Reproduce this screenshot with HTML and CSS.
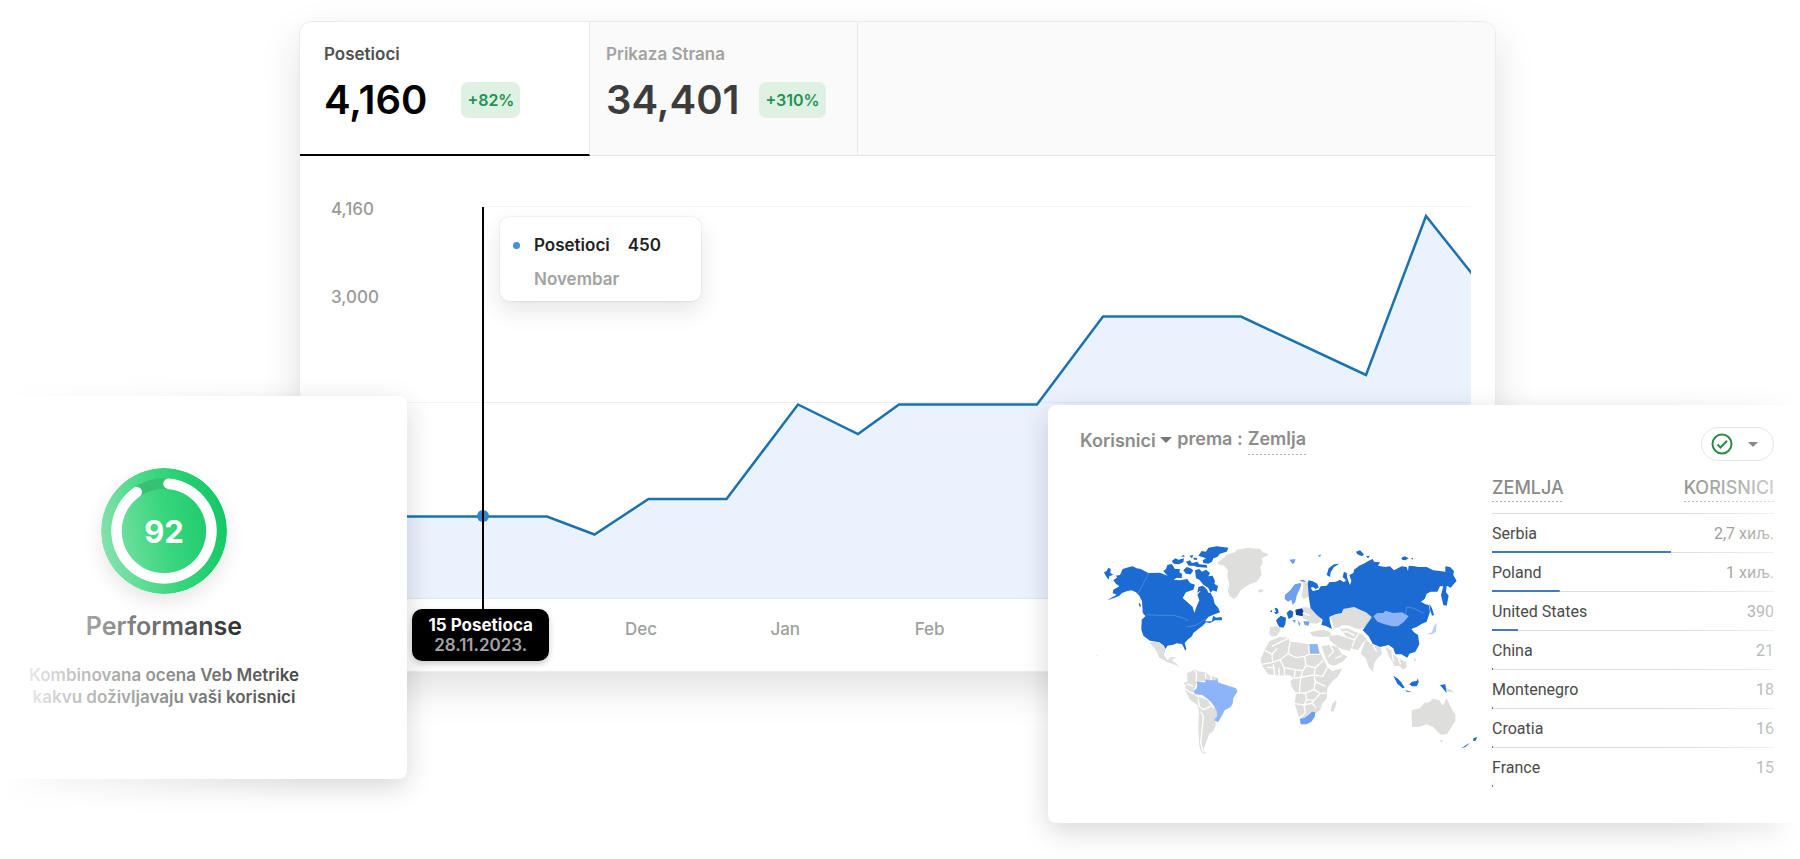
FILE: index.html
```html
<!DOCTYPE html>
<html lang="sr-Latn">
<head>
<meta charset="utf-8">
<meta name="viewport" content="width=device-width, initial-scale=1">
<title>Analitika</title>
<link rel="stylesheet" href="styles.css">
</head>
<body>
<main class="stage">

  <section class="panel" aria-label="Posete">
    <div class="tabs" role="tablist">
      <button class="tab tab-active" role="tab" aria-selected="true">
        <span class="tab-title">Posetioci</span>
        <span class="tab-row"><span class="tab-value">4,160</span><span class="badge">+82%</span></span>
      </button>
      <button class="tab tab-second" role="tab" aria-selected="false">
        <span class="tab-title">Prikaza Strana</span>
        <span class="tab-row"><span class="tab-value">34,401</span><span class="badge">+310%</span></span>
      </button>
      <div class="tabs-rest"></div>
    </div>
    <div class="chart">
      <div class="y-axis"><span>4,160</span><span>3,000</span></div>
      <div class="plot">
        <svg class="plot-svg" viewBox="380 206 1091 393" preserveAspectRatio="none" aria-hidden="true">
          <path class="grid" d="M484 206.500H1471M380 402.500H1471"/>
          <path class="area" d="M380 516.500H547L594.500 534.500L648.500 499H726.500L798 404.500L858 434L899 404.500H1037L1103 316.500H1241L1366 375L1426 216L1471 272V598H380Z"/>
          <path class="grid" d="M484 402.500H1471"/>
          <path class="base" d="M380 598.500H1471"/>
          <path class="line" d="M380 516.500H547L594.500 534.500L648.500 499H726.500L798 404.500L858 434L899 404.500H1037L1103 316.500H1241L1366 375L1426 216L1473 275"/>
        </svg>
        <div class="marker">
          <span class="marker-dot"></span>
          <div class="marker-label"><strong>15 Posetioca</strong><span>28.11.2023.</span></div>
        </div>
        <div class="tooltip">
          <span class="tooltip-dot"></span><span>Posetioci</span><span>450</span>
          <span class="tooltip-month">Novembar</span>
        </div>
        <div class="months"><span>Dec</span><span>Jan</span><span>Feb</span></div>
      </div>
    </div>
  </section>

  <section class="score" aria-label="Performanse">
    <svg class="gauge" viewBox="0 0 126 126" role="img" aria-label="Ocena 92">
      <defs>
        <linearGradient id="gauge-fill" x1="0" y1="0.600" x2="1" y2="0.400">
          <stop offset="0" stop-color="#86e2ad"/>
          <stop offset="0.500" stop-color="#3bd67f"/>
          <stop offset="1" stop-color="#12c864"/>
        </linearGradient>
      </defs>
      <circle cx="63" cy="63" r="63" fill="url(#gauge-fill)"/>
      <path d="M35.700 24.100A47.500 47.500 0 0 1 67.500 15.700" fill="none" stroke="#36c174" stroke-width="10.500"/>
      <path d="M67.500 15.700A47.500 47.500 0 1 1 35.700 24.100" fill="none" stroke="#fff" stroke-width="10.500" stroke-linecap="round"/>
      <text class="gauge-text" x="63" y="75" text-anchor="middle">92</text>
    </svg>
    <h2 class="score-title">Performanse</h2>
    <p class="score-text">Kombinovana ocena Veb Metrike<br>kakvu doživljavaju vaši korisnici</p>
  </section>

  <section class="users" aria-label="Korisnici prema zemlji">
    <header class="users-head">
      <div class="users-title">
        <button class="plain">Korisnici <svg width="12" height="6" viewBox="0 0 12 6" aria-hidden="true"><path d="M0 0H12L6 6Z" fill="#777"/></svg></button>
        <span>prema :</span>
        <a class="dotted" href="#zemlja">Zemlja</a>
      </div>
      <button class="pill" aria-label="Status podataka">
        <svg width="22" height="22" viewBox="0 0 22 22" aria-hidden="true"><circle cx="11" cy="11" r="9.500" fill="none" stroke="#2f8a4c" stroke-width="2"/><path d="M6.500 11.500L9.500 14.500L16 7.800" fill="none" stroke="#2f8a4c" stroke-width="2"/></svg>
        <svg width="10" height="5" viewBox="0 0 10 5" aria-hidden="true"><path d="M0 0H10L5 5Z" fill="#888"/></svg>
      </button>
    </header>
    <div class="users-body" id="zemlja">
      <svg class="map" viewBox="45 40 1155 640" role="img" aria-label="Mapa sveta">
        <g class="land-blue">
          <path d="M100 152L112 143L107 138L120 136L128 118L145 113L158 110L170 116L182 118L205 130L240 129L262 138L275 150L300 152L322 148L330 160L345 165L340 180L318 188L308 205L325 220L338 232L343 250L350 230L358 212L352 195L365 180L380 178L386 190L392 190L400 205L404 222L415 235L420 248L400 255L385 262L375 275L395 275L400 258L408 264L425 262L426 272L405 272L390 280L378 278L368 288L355 298L340 310L336 320L325 328L314 340L319 358L316 363L312 355L306 343L290 341L280 345L262 348L257 358L248 345L238 338L210 333L190 318L184 300L185 270L196 260L188 245L186 215L178 198L168 188L155 182L140 185L126 190L118 198L100 206L82 212L98 202L110 195L98 190L100 180L118 170L108 162Z"/>
          <path d="M72 128L80 124L85 114L92 118L91 130L100 135L88 140L86 150L78 140Z"/>
          <path d="M176 220L181 222L183 232L178 230ZM186 244L196 252L200 260L190 252Z"/>
          <path d="M250 124L258 118L262 106L275 103L285 118L300 118L298 128L306 132L305 146L290 144L280 152L268 150L262 138Z"/>
          <path d="M345 122L358 118L366 126L378 120L390 130L385 140L398 138L405 155L403 162L414 170L410 186L398 182L392 190L385 175L370 165L358 150L348 146Z"/>
          <path d="M355 78L365 64L378 66L385 54L410 50L445 54L440 66L420 72L412 82L400 86L396 96L385 102L370 100L368 92L378 86Z"/>
          <path d="M275 95L286 86L296 90L312 86L310 98L296 104L282 102ZM302 80L312 76L314 82ZM318 96L330 92L336 100L352 96L358 104L380 106L382 114L352 112L340 108L326 108ZM328 78L340 76L336 86ZM310 122L320 112L332 116L340 122L332 134L318 132ZM355 172L368 168L378 176L372 184L360 184L352 190ZM340 84L350 84L352 90L342 90Z"/>
        </g>
        <path class="edge" d="M206 131L174 192M199 255L232 257L282 257L312 266L325 274M320 292L342 288L360 280L376 266"/>
        <g class="land-gray">
          <path d="M413 98L432 84L440 75L465 68L470 60L500 55L540 58L548 68L565 73L560 80L545 85L548 102L540 112L545 136L530 156L510 164L495 172L480 184L472 200L462 208L450 200L443 185L448 165L442 140L444 122L432 108L415 104Z"/>
          <path d="M534 183L540 179L552 181L545 188L537 188Z"/>
          <path d="M208 336L236 338L252 348L256 362L252 376L262 392L270 384L284 382L276 394L288 400L298 412L286 406L260 396L238 384L228 362L220 352Z"/>
          <path d="M266 384L284 382L290 386L272 386ZM92 94L101 96L99 100ZM48 376L54 374L51 380Z"/>
          <path d="M322 430L336 424L345 417L352 424L376 428L390 438L412 444L415 458L380 452L350 458L342 480L340 492L352 503L370 505L384 512L392 530L408 538L414 555L404 572L408 584L400 604L388 612L382 628L376 644L370 660L378 673L366 670L358 650L355 600L357 545L352 525L330 510L314 478L318 466L310 460L322 456Z"/>
        </g>
        <path class="border" d="M342 417L350 432L348 456M320 462L340 470M314 476L330 488L342 492M354 506L358 530L370 540L392 530M362 545L370 560L366 600L362 640L370 668M376 430L378 450M392 438L394 454"/>
        <path class="land-light" d="M341 484L350 476L352 466L350 456L368 458L376 458L376 448L384 452L408 452L412 446L414 458L426 462L445 468L468 476L472 486L460 505L458 522L452 532L434 542L428 554L420 568L414 578L402 572L412 558L410 544L400 526L390 514L378 504L366 496L345 494Z"/>

        <g transform="translate(540 0)">
          <g class="land-gray">
            <path d="M30 292L50 290L62 296L58 308L48 320L34 320L28 312Z"/>
            <path d="M130 154L142 160L146 178L148 200L132 208L124 200L128 182ZM128 232L150 234L164 250L182 262L184 276L168 282L150 280L140 272L128 264Z"/>
            <path d="M212 264L225 252L250 250L248 238L262 236L280 232L300 240L318 246L338 260L325 275L318 292L300 298L284 296L270 288L246 286L236 294L222 294Z"/>
            <path d="M150 308L176 302L198 302L214 310L208 320L184 322L158 320Z"/>
            <path d="M28 335L58 322L84 324L90 336L108 338L146 344L172 342L180 368L190 388L202 412L216 424L246 416L236 438L216 456L202 476L200 508L186 522L180 542L166 552L155 576L124 585L116 560L104 522L108 490L94 470L92 454L100 446L88 436L60 438L24 434L4 404L2 388L14 360Z"/>
            <path d="M184 350L208 346L232 352L246 374L262 380L248 396L222 408L206 402L196 382Z"/>
            <path d="M206 318L234 316L264 326L274 346L270 364L244 358L222 344L210 332Z"/>
            <path d="M240 298L262 296L284 306L308 314L320 328L306 342L294 362L274 356L262 324Z"/>
            <path d="M318 330L334 344L362 354L366 372L350 388L342 404L338 426L326 412L318 386L302 372L310 350Z"/>
            <path d="M376 352L394 362L402 376L414 386L428 392L438 396L440 412L430 420L418 408L404 410L394 392L386 378Z"/>
            <path d="M455 542L480 536L492 520L508 518L518 507L538 512L548 528L560 506L570 528L586 556L586 574L572 596L562 612L545 616L530 604L520 592L500 584L476 592L456 592Z"/>
            <path d="M540 630L549 632L544 640ZM558 474L574 480L582 488L562 486ZM216 524L228 512L230 520L220 546L212 544Z"/>
          </g>
          <g class="land-blue">
            <path d="M143 160L146 152L158 155L172 162L176 174L166 178L160 172L152 174L158 184L176 180L182 170L200 168L208 158L228 156L240 150L252 158L258 152L248 142L252 126L260 130L262 146L270 166L274 154L268 136L280 130L282 120L298 108L315 100L325 94L338 88L342 96L360 98L354 108L376 112L390 110L402 122L425 110L440 112L444 124L446 108L465 110L474 112L500 112L520 122L540 124L556 126L556 110L570 112L582 124L580 136L590 154L584 160L572 174L560 168L558 188L566 198L560 228L550 226L543 196L550 170L540 170L532 186L512 186L500 192L494 208L483 216L496 224L506 226L510 246L500 276L486 282L470 292L454 298L462 308L474 316L478 344L466 366L448 372L442 384L424 374L406 374L400 356L386 346L360 352L338 342L326 320L308 302L318 288L335 262L318 248L300 240L282 232L262 236L250 238L246 250L226 254L208 262L210 278L216 298L196 288L184 286L188 270L168 254L152 236L148 214L146 196Z"/>
            <path d="M200 136L206 116L222 104L238 102L222 112L212 128L210 142ZM288 66L300 62L312 74L306 80L292 74ZM318 80L330 78L324 86ZM424 84L434 80L446 86L436 92L426 90ZM452 86L460 86L458 90ZM508 222L516 236L522 256L516 258L510 240Z"/>
            <path d="M54 266L62 258L78 264L76 284L70 294L58 292L52 282L48 272ZM80 250L90 240L100 246L98 262L86 268ZM48 234L54 238L56 250L48 254L42 248L48 246L44 236ZM30 246L36 240L36 248Z"/>
            <path d="M400 438L412 446L424 458L434 474L428 476L412 462ZM448 464L456 456L470 454L474 446L476 458L470 470L456 470ZM540 466L556 464L560 490L548 476ZM436 482L456 486L440 486ZM604 656L622 644L630 640L616 652ZM640 626L652 622L646 634L640 634Z"/>
          </g>
          <path d="M106 240L126 236L130 244L128 260L108 256Z" fill="#0b3fa0"/>
          <g class="land-mid">
            <path d="M88 90L106 88L104 98L98 104ZM172 78L184 74L180 82ZM75 196L92 180L104 164L122 160L124 166L118 180L110 198L106 216L98 226L94 210L84 216L74 208ZM118 152L130 150L140 156L126 156ZM130 274L148 276L146 288L134 286ZM112 272L122 282L118 290ZM96 270L108 272L104 280Z"/>
            <path d="M120 568L134 564L146 556L156 546L166 548L164 562L154 576L140 584L122 584Z"/>
          </g>
          <g class="land-light">
            <path d="M340 260L352 250L370 250L376 243L400 250L426 248L446 260L432 276L414 290L396 290L374 284L352 276Z"/>
            <path d="M146 344L172 343L178 374L148 374Z"/>
          </g>
          <path class="border" d="M36 350L60 338L84 326M14 362L36 374L52 356M36 374L38 398L4 404M38 398L60 390L84 372L90 338M84 372L108 384L134 380L148 374L146 344M148 374H180M134 380L138 408L128 424L106 420L72 414L60 390M72 414L74 438M40 404L44 436M106 420L102 446M138 408L166 414L190 392M166 414L162 436L128 442L102 446M162 436L188 440L202 414M162 436L166 456L162 480L136 490L108 490M166 456L196 470M162 480L180 492L198 490M136 490L140 510L162 512L180 492M140 510L132 526L104 522M132 526L136 550L118 566M132 526L156 520L168 534M156 520L162 512M226 386L246 378M210 346L220 366L204 382M128 424L122 446L118 488M20 414L44 414M56 414L58 438"/>
          <path class="border" d="M262 324L284 330L296 312M284 330L276 352M340 348L350 366M396 366L400 396M416 388L422 404M240 308L262 306L284 318M150 258L128 250"/>
          <path class="edge" d="M338 262L328 274L316 290M436 256L440 232L462 236L490 250"/>
          <path d="M522 290L530 280L528 306L516 314L500 314L516 308ZM484 466L490 466ZM514 460L520 462M462 384L468 390L464 396Z" fill="#b9cff5"/>
        </g>
      </svg>
      <table class="countries">
        <thead><tr><th scope="col"><span class="dotted">ZEMLJA</span></th><th scope="col"><span class="dotted">KORISNICI</span></th></tr></thead>
        <tbody>
          <tr style="--share:63.500%"><td>Serbia</td><td>2,7 хиљ.</td></tr>
          <tr style="--share:24%"><td>Poland</td><td>1 хиљ.</td></tr>
          <tr style="--share:9.200%"><td>United States</td><td>390</td></tr>
          <tr style="--share:0.400%"><td>China</td><td>21</td></tr>
          <tr style="--share:0.400%"><td>Montenegro</td><td>18</td></tr>
          <tr style="--share:0.400%"><td>Croatia</td><td>16</td></tr>
          <tr style="--share:0.400%"><td>France</td><td>15</td></tr>
        </tbody>
      </table>
    </div>
  </section>

</main>
</body>
</html>
```
FILE: styles.css
```css
* { box-sizing: border-box; }

body {
  margin: 0;
  background: #fff;
  font-family: Inter, "Liberation Sans", sans-serif;
  color: #111;
  overflow-x: hidden;
}

button {
  font: inherit;
  color: inherit;
  background: none;
  border: 0;
  padding: 0;
  text-align: left;
  cursor: pointer;
}

a { color: inherit; text-decoration: none; }

.stage {
  display: grid;
  grid-template-columns: 300fr 107fr 641fr 447fr 305fr;
  align-items: start;
  padding-bottom: 36px;
  overflow: hidden;
}

/* Visitors panel */
.panel {
  grid-area: 1 / 2 / 2 / 5;
  margin-top: 22px;
  background: #fff;
  border-radius: 12px;
  box-shadow: 0 0 0 1px #ececec, 0 16px 40px rgba(0, 0, 0, 0.13);
}

.tabs {
  display: grid;
  grid-template-columns: 290fr 268fr 637fr;
  height: 134px;
  border-radius: 12px 12px 0 0;
  overflow: hidden;
}

.tab {
  display: flex;
  flex-direction: column;
  gap: 16px;
  padding: 22px 16px 0;
  background: #fafafa;
  border-right: 1px solid #e8e8e8;
  border-bottom: 1px solid #e4e4e4;
}

.tab-active {
  padding-left: 24px;
  background: #fff;
  border-bottom: 2px solid #000;
}

.tabs-rest { background: #fafafa; border-bottom: 1px solid #e4e4e4; }

.tab-title { font-size: 17px; line-height: 20px; font-weight: 600; color: #a2a2a2; }
.tab-active .tab-title { color: #505050; }

.tab-row { display: flex; align-items: center; gap: 34px; }
.tab-second .tab-row { gap: 20px; }

.tab-value { font-size: 40px; line-height: 40px; font-weight: 600; color: #3c3c3c; }
.tab-active .tab-value { color: #000; }

.badge {
  padding: 8px 6px;
  border-radius: 7px;
  background: #dff1e2;
  color: #1f9254;
  font-size: 16px;
  line-height: 20px;
  font-weight: 600;
}

.chart {
  display: flex;
  padding: 50px 24px 0 31px;
}

.y-axis {
  flex: 0 0 49px;
  display: flex;
  flex-direction: column;
  gap: 68px;
  margin-top: -7px;
  font-size: 17px;
  line-height: 20px;
  font-weight: 500;
  color: #999;
}

.plot { position: relative; flex: 1; }

.plot-svg { display: block; width: 100%; height: 393px; }

.plot-svg path { vector-effect: non-scaling-stroke; }
.grid { fill: none; stroke: rgba(0, 0, 0, 0.04); }
.base { fill: none; stroke: #e4e7ec; }
.area { fill: #e9f2fd; }
.line { fill: none; stroke: #1b72ad; stroke-width: 2.5; }

.marker {
  position: absolute;
  left: 9%;
  top: 1px;
  width: 10px;
  height: 402px;
  background: linear-gradient(#000, #000) center / 2px 100% no-repeat;
}

.marker-dot {
  position: absolute;
  left: -1px;
  top: 303px;
  width: 12px;
  height: 12px;
  border-radius: 50%;
  background: linear-gradient(#000, #000) center / 2px 100% no-repeat, #2f86cc;
}

.marker-label {
  position: absolute;
  left: -66px;
  top: 100%;
  width: 137px;
  padding: 6px 0;
  border-radius: 10px;
  background: #000;
  color: #a3a3a3;
  text-align: center;
  font-size: 17px;
  line-height: 20px;
  font-weight: 600;
  box-shadow: 0 3px 6px rgba(0, 0, 0, 0.2);
}

.marker-label strong { display: block; color: #fff; font-weight: 700; }

.tooltip {
  position: absolute;
  left: 11%;
  top: 11px;
  width: 201px;
  display: grid;
  grid-template-columns: 7px auto 1fr;
  align-items: center;
  column-gap: 14px;
  row-gap: 14px;
  padding: 18px 13px 12px;
  border-radius: 9px;
  background: #fff;
  box-shadow: 0 0 2px rgba(0, 0, 0, 0.15), 0 10px 24px rgba(0, 0, 0, 0.1);
  font-size: 17px;
  line-height: 20px;
  font-weight: 600;
  color: #222;
}

.tooltip > :nth-child(3) { padding-left: 4px; }
.tooltip-dot { width: 7px; height: 7px; border-radius: 50%; background: #3f8fd9; }
.tooltip-month { grid-column: 2 / 4; color: #a2a2a2; }

.months {
  display: grid;
  grid-template-columns: repeat(3, 16%);
  padding: 20px 0 32px 17.3%;
  text-align: center;
  font-size: 17px;
  line-height: 20px;
  font-weight: 500;
  color: #a0a0a0;
}

/* Score card */
.score {
  grid-area: 1 / 1 / 2 / 3;
  position: relative;
  display: flex;
  flex-direction: column;
  align-items: center;
  margin-top: 396px;
  padding: 72px 79px 71px 0;
  border-radius: 0 8px 8px 0;
  background: #fff;
  box-shadow: 0 8px 28px rgba(0, 0, 0, 0.16);
  text-align: center;
}

/* White haze that dissolves the card's outer side */
.score::after {
  content: "";
  position: absolute;
  inset: -48px 25% -48px 0;
  background: linear-gradient(90deg, #fff, rgba(255, 255, 255, 0.68) 25%, rgba(255, 255, 255, 0.3) 65%, rgba(255, 255, 255, 0));
  pointer-events: none;
}

.gauge {
  position: relative;
  z-index: 1;
  width: 126px;
  height: 126px;
  border-radius: 50%;
  box-shadow: 0 8px 20px rgba(0, 0, 0, 0.1);
}

.gauge-text { font-size: 31px; font-weight: 700; fill: #fff; }

.score-title { margin: 17px 0 23px; font-size: 25px; line-height: 30px; font-weight: 600; color: #000; }
.score-text { margin: 0; white-space: nowrap; font-size: 17px; line-height: 22px; font-weight: 600; color: #444; }

/* Users card */
.users {
  grid-area: 1 / 4 / 2 / 6;
  position: relative;
  margin-top: 405px;
  padding: 22px 26px 36px 32px;
  border-radius: 8px;
  background: #fff;
  box-shadow: 0 8px 28px rgba(0, 0, 0, 0.16);
}

.users::after {
  content: "";
  position: absolute;
  inset: -24px 0 -48px 82%;
  background: linear-gradient(90deg, rgba(255, 255, 255, 0), rgba(255, 255, 255, 0.5) 75%, #fff);
  pointer-events: none;
}

.users-head { display: flex; justify-content: space-between; align-items: flex-start; }

.users-title {
  display: flex;
  gap: 5px;
  font-size: 18px;
  line-height: 24px;
  font-weight: 600;
  color: #8c8c8c;
}

.plain svg { vertical-align: 4px; }

.dotted {
  padding-bottom: 4px;
  background: repeating-linear-gradient(90deg, #b0b0b0 0 2px, transparent 2px 4px) left bottom / 100% 1px no-repeat;
}

.pill {
  position: relative;
  z-index: 1;
  display: flex;
  align-items: center;
  justify-content: space-between;
  width: 73px;
  height: 34px;
  padding: 0 15px 0 9px;
  border: 1px solid #e6e6e6;
  border-radius: 17px;
}

.users-body { display: flex; justify-content: space-between; align-items: flex-start; }

.map { flex: 0 1 385px; margin: 82px 0 0 15px; min-width: 0; }
.land-blue { fill: #1b6bd3; }
.land-mid { fill: #6f9ff0; }
.land-light { fill: #8db3f8; }
.land-gray { fill: #dededd; }
.border { fill: none; stroke: #fff; stroke-width: 4; }
.edge { fill: none; stroke: #5d98e4; stroke-width: 2; }

.countries {
  width: 282px;
  border-collapse: collapse;
  font-family: Roboto, "Noto Sans", sans-serif;
  font-size: 16px;
  line-height: 18px;
  color: #4a4a4a;
}

.countries th {
  height: 53px;
  padding: 0;
  text-align: left;
  font-family: Inter, "Liberation Sans", sans-serif;
  font-size: 18px;
  line-height: 20px;
  font-weight: 500;
  color: #8a8a8a;
}

.countries td { height: 39px; padding: 0; }

.countries th:last-child,
.countries td:last-child { text-align: right; }
.countries td:last-child { color: #777; }

.countries tr {
  background:
    linear-gradient(#4479c4, #4479c4) left bottom / var(--share, 0) 2px no-repeat,
    linear-gradient(#dcdcdc, #dcdcdc) left bottom / 100% 1px no-repeat;
}

.countries tbody tr:last-child {
  background: linear-gradient(#4479c4, #4479c4) left bottom / var(--share, 0) 2px no-repeat;
}
```
